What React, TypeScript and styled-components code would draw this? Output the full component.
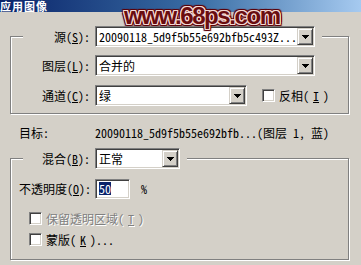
import React from "react";
import styled, { createGlobalStyle } from "styled-components";

const GlobalStyle = createGlobalStyle`
  html, body {
    margin: 0;
    padding: 0;
    background: #d4d0c8;
  }
  body {
    font-family: "Noto Sans Mono CJK SC", "Noto Sans CJK SC", "Liberation Mono", monospace;
    font-size: 12px;
    color: #000;
  }
`;

const Window = styled.div`
  position: relative;
  width: 361px;
  height: 265px;
  overflow: hidden;
  background: #d4d0c8;
`;

const TitleBar = styled.div`
  height: 12px;
  display: flex;
  align-items: center;
  background: linear-gradient(to right, #0a246a 0%, #3a6ea5 55%, #a6caf0 100%);
`;

const TitleText = styled.span`
  color: #fff;
  font-family: "Noto Sans CJK SC", sans-serif;
  font-weight: bold;
  font-size: 11px;
  line-height: 12px;
  letter-spacing: 1px;
`;

// watermark stamped over the screenshot
const Watermark = styled.div`
  position: absolute;
  left: 124px;
  top: 3px;
  font-family: "Liberation Sans", Arial, sans-serif;
  font-weight: bold;
  font-size: 24px;
  line-height: 26px;
  letter-spacing: -1.4px;
  color: #6a0d10;
  text-shadow:
    1px 0 #f4d8d2, -1px 0 #f4d8d2, 0 1px #f4d8d2, 0 -1px #f4d8d2,
    1px 1px #f4d8d2, -1px -1px #f4d8d2, 1px -1px #f4d8d2, -1px 1px #f4d8d2,
    2px 0 #5a0008, -2px 0 #5a0008, 0 2px #5a0008, 0 -2px #5a0008,
    2px 2px 1px #5a0008, -2px -2px 1px #5a0008, 2px -2px 1px #5a0008, -2px 2px 1px #5a0008;
`;

const Body = styled.div`
  padding: 14px 0 0 10px;
`;

const Group = styled.fieldset<{ $pt: number; $pb: number; $mt?: number }>`
  box-sizing: border-box;
  width: 339px;
  margin: ${(p) => p.$mt ?? 0}px 0 0 0;
  padding: ${(p) => p.$pt}px 0 ${(p) => p.$pb}px 8px;
  border: 1px solid #808080;
  box-shadow: inset 1px 1px 0 #fff, 1px 1px 0 #fff;
`;

const Legend = styled.legend`
  display: flex;
  align-items: center;
  gap: 5px;
  margin-left: 4px;
  padding: 0 7px 0 0;
  background: #d4d0c8;
  height: 21px;
`;

const Row = styled.div<{ $mt?: number }>`
  display: flex;
  align-items: center;
  gap: 5px;
  height: 21px;
  margin-top: ${(p) => p.$mt ?? 0}px;
`;

const Label = styled.span<{ $w: number }>`
  width: ${(p) => p.$w}px;
  text-align: right;
  white-space: nowrap;
  line-height: 14px;
`;

const ComboBox = styled.div<{ $w: number }>`
  box-sizing: border-box;
  width: ${(p) => p.$w}px;
  height: 21px;
  display: flex;
  padding: 1px;
  background: #fff;
  border: 1px solid;
  border-color: #808080 #fff #fff #808080;
  box-shadow: inset 1px 1px 0 #404040, inset -1px -1px 0 #d4d0c8;
`;

const ComboText = styled.span`
  flex: 1;
  padding-left: 2px;
  display: flex;
  align-items: center;
  white-space: nowrap;
  overflow: hidden;
`;

const DropButton = styled.span`
  box-sizing: border-box;
  width: 16px;
  display: flex;
  align-items: center;
  justify-content: center;
  background: #d4d0c8;
  border: 1px solid;
  border-color: #d4d0c8 #404040 #404040 #d4d0c8;
  box-shadow: inset 1px 1px 0 #fff, inset -1px -1px 0 #808080;
`;

const Check = styled.span`
  box-sizing: border-box;
  width: 13px;
  height: 13px;
  flex: none;
  background: #fff;
  border: 1px solid;
  border-color: #808080 #fff #fff #808080;
  box-shadow: inset 1px 1px 0 #404040, inset -1px -1px 0 #d4d0c8;
`;

const CheckRow = styled.div<{ $mt: number; $pl: number; $disabled?: boolean }>`
  display: flex;
  align-items: center;
  gap: 4px;
  height: 13px;
  margin-top: ${(p) => p.$mt}px;
  padding-left: ${(p) => p.$pl}px;
  color: ${(p) => (p.$disabled ? "#808080" : "#000")};
  text-shadow: ${(p) => (p.$disabled ? "1px 1px 0 #fff" : "none")};
  white-space: nowrap;
`;

const TargetRow = styled.div`
  display: flex;
  align-items: center;
  height: 14px;
  margin-top: 11px;
  padding-left: 9px;
  white-space: nowrap;
`;

const TargetLabel = styled.span`
  width: 76px;
`;

const NumberField = styled.div`
  box-sizing: border-box;
  width: 35px;
  height: 20px;
  display: flex;
  align-items: center;
  padding-left: 3px;
  background: #fff;
  border: 1px solid;
  border-color: #808080 #fff #fff #808080;
  box-shadow: inset 1px 1px 0 #404040, inset -1px -1px 0 #d4d0c8;
`;

const Selected = styled.span`
  background: #0a246a;
  color: #fff;
  line-height: 13px;
`;

const Arrow = () => (
  <svg width="7" height="4" viewBox="0 0 7 4" shapeRendering="crispEdges">
    <path d="M0 0h7v1h-1v1h-1v1h-1v1h-1v-1h-1v-1h-1v-1h-1z" fill="#000" />
  </svg>
);

function Combo({ width, value }: { width: number; value: string }) {
  return (
    <ComboBox $w={width}>
      <ComboText>{value}</ComboText>
      <DropButton>
        <Arrow />
      </DropButton>
    </ComboBox>
  );
}

export default function App() {
  return (
    <Window>
      <GlobalStyle />
      <TitleBar>
        <TitleText>应用图像</TitleText>
      </TitleBar>
      <Watermark>www.68ps.com</Watermark>

      <Body>
        <Group $pt={8} $pb={7}>
          <Legend>
            <Label $w={67}>
              源(<u>S</u>):
            </Label>
            <Combo width={220} value="20090118_5d9f5b55e692bfb5c493Z..." />
          </Legend>
          <Row>
            <Label $w={71}>
              图层(<u>L</u>):
            </Label>
            <Combo width={220} value="合并的" />
          </Row>
          <Row $mt={9}>
            <Label $w={71}>
              通道(<u>C</u>):
            </Label>
            <Combo width={152} value="绿" />
            <CheckRow $mt={0} $pl={10}>
              <Check />
              反相(<u>I</u>)
            </CheckRow>
          </Row>
        </Group>

        <TargetRow>
          <TargetLabel>目标:</TargetLabel>
          <span>20090118_5d9f5b55e692bfb...(图层 1, 蓝)</span>
        </TargetRow>

        <Group $pt={9} $pb={13} $mt={9}>
          <Legend>
            <Label $w={67}>
              混合(<u>B</u>):
            </Label>
            <Combo width={85} value="正常" />
          </Legend>
          <Row>
            <Label $w={71}>
              不透明度(<u>O</u>):
            </Label>
            <NumberField>
              <Selected>50</Selected>
            </NumberField>
            <span>&nbsp;%</span>
          </Row>
          <CheckRow $mt={13} $pl={10} $disabled>
            <Check />
            保留透明区域(<u>T</u>)
          </CheckRow>
          <CheckRow $mt={8} $pl={10}>
            <Check />
            蒙版(<u>K</u>)...
          </CheckRow>
        </Group>
      </Body>
    </Window>
  );
}
